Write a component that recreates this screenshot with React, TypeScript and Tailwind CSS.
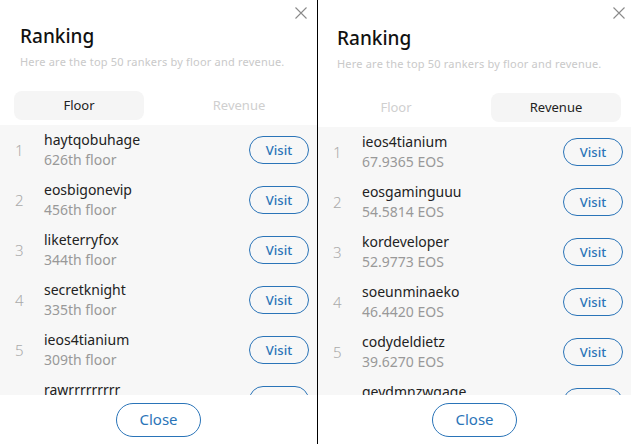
type Ranker = { name: string; value: string };

const floorRankers: Ranker[] = [
  { name: "haytqobuhage", value: "626th floor" },
  { name: "eosbigonevip", value: "456th floor" },
  { name: "liketerryfox", value: "344th floor" },
  { name: "secretknight", value: "335th floor" },
  { name: "ieos4tianium", value: "309th floor" },
  { name: "rawrrrrrrrrr", value: "301th floor" },
];

const revenueRankers: Ranker[] = [
  { name: "ieos4tianium", value: "67.9365 EOS" },
  { name: "eosgaminguuu", value: "54.5814 EOS" },
  { name: "kordeveloper", value: "52.9773 EOS" },
  { name: "soeunminaeko", value: "46.4420 EOS" },
  { name: "codydeldietz", value: "39.6270 EOS" },
  { name: "geydmnzwgage", value: "38.1022 EOS" },
];

export default function App() {
  return (
    <div
      className="flex w-[631px] h-[444px] bg-white overflow-hidden"
      style={{ fontFamily: '"Noto Sans", "Noto Sans CJK KR", sans-serif' }}
    >
      <RankingPanel tab="floor" rankers={floorRankers} />
      <div className="w-px shrink-0 bg-black" />
      <RankingPanel tab="revenue" rankers={revenueRankers} />
    </div>
  );
}

function RankingPanel({ tab, rankers }: { tab: "floor" | "revenue"; rankers: Ranker[] }) {
  const isFloor = tab === "floor";
  return (
    <div
      className={`relative flex flex-col h-full ${
        isFloor ? "w-[317px] pt-[22px]" : "w-[313px] pt-[24px]"
      }`}
    >
      {/* close icon */}
      <button className="absolute top-[7px] left-[295px] w-3 h-3">
        <svg viewBox="0 0 12 12" width="12" height="12" fill="none" stroke="#8a8a8a" strokeWidth="1.1">
          <path d="M0.5 0.5L11.5 11.5M11.5 0.5L0.5 11.5" />
        </svg>
      </button>

      <h2
        className={`text-[19px] leading-[28px] font-medium text-[#111] ${isFloor ? "pl-5" : "pl-[19px]"}`}
      >
        Ranking
      </h2>
      <p
        className={`mt-1 text-[11px] leading-4 text-[#c9c9c9] tracking-[0.2px] ${
          isFloor ? "pl-5" : "pl-[19px]"
        }`}
      >
        Here are the top 50 rankers by floor and revenue.
      </p>

      {/* tabs */}
      <div className={`flex gap-[30px] mt-[21px] ${isFloor ? "pl-[14px]" : "pl-[13px]"}`}>
        <TabPill label="Floor" active={isFloor} />
        <TabPill label="Revenue" active={!isFloor} />
      </div>

      {/* list */}
      <div className="flex-1 min-h-0 mt-[5px] bg-[#f7f7f7] overflow-hidden">
        {rankers.map((r, i) => (
          <RankRow key={r.name} rank={i + 1} ranker={r} />
        ))}
      </div>

      {/* footer */}
      <div className="h-[49px] shrink-0 flex items-center justify-center bg-white">
        <button className="w-[85px] h-[34px] rounded-full border border-[#2a74b8] text-[#2a74b8] text-[15px] leading-none">
          Close
        </button>
      </div>
    </div>
  );
}

function TabPill({ label, active }: { label: string; active: boolean }) {
  return (
    <div
      className={`w-[130px] h-[29px] rounded-lg flex items-center justify-center text-[13px] ${
        active ? "bg-[#f5f5f5] text-[#222]" : "text-[#cfcfcf]"
      }`}
    >
      {label}
    </div>
  );
}

function RankRow({ rank, ranker }: { rank: number; ranker: Ranker }) {
  return (
    <div className="flex items-center h-[50px] pl-[15px] pr-[8px]">
      <span className="w-[29px] text-[15px] font-light text-[#aaa]">{rank}</span>
      <div className="flex-1 flex flex-col">
        <span className="text-[14px] leading-5 text-[#222]">{ranker.name}</span>
        <span className="text-[14px] leading-5 text-[#999]">{ranker.value}</span>
      </div>
      <button className="w-[60px] h-[28px] rounded-full border border-[#2a74b8] text-[#2a74b8] text-[13px] font-medium leading-none">
        Visit
      </button>
    </div>
  );
}
